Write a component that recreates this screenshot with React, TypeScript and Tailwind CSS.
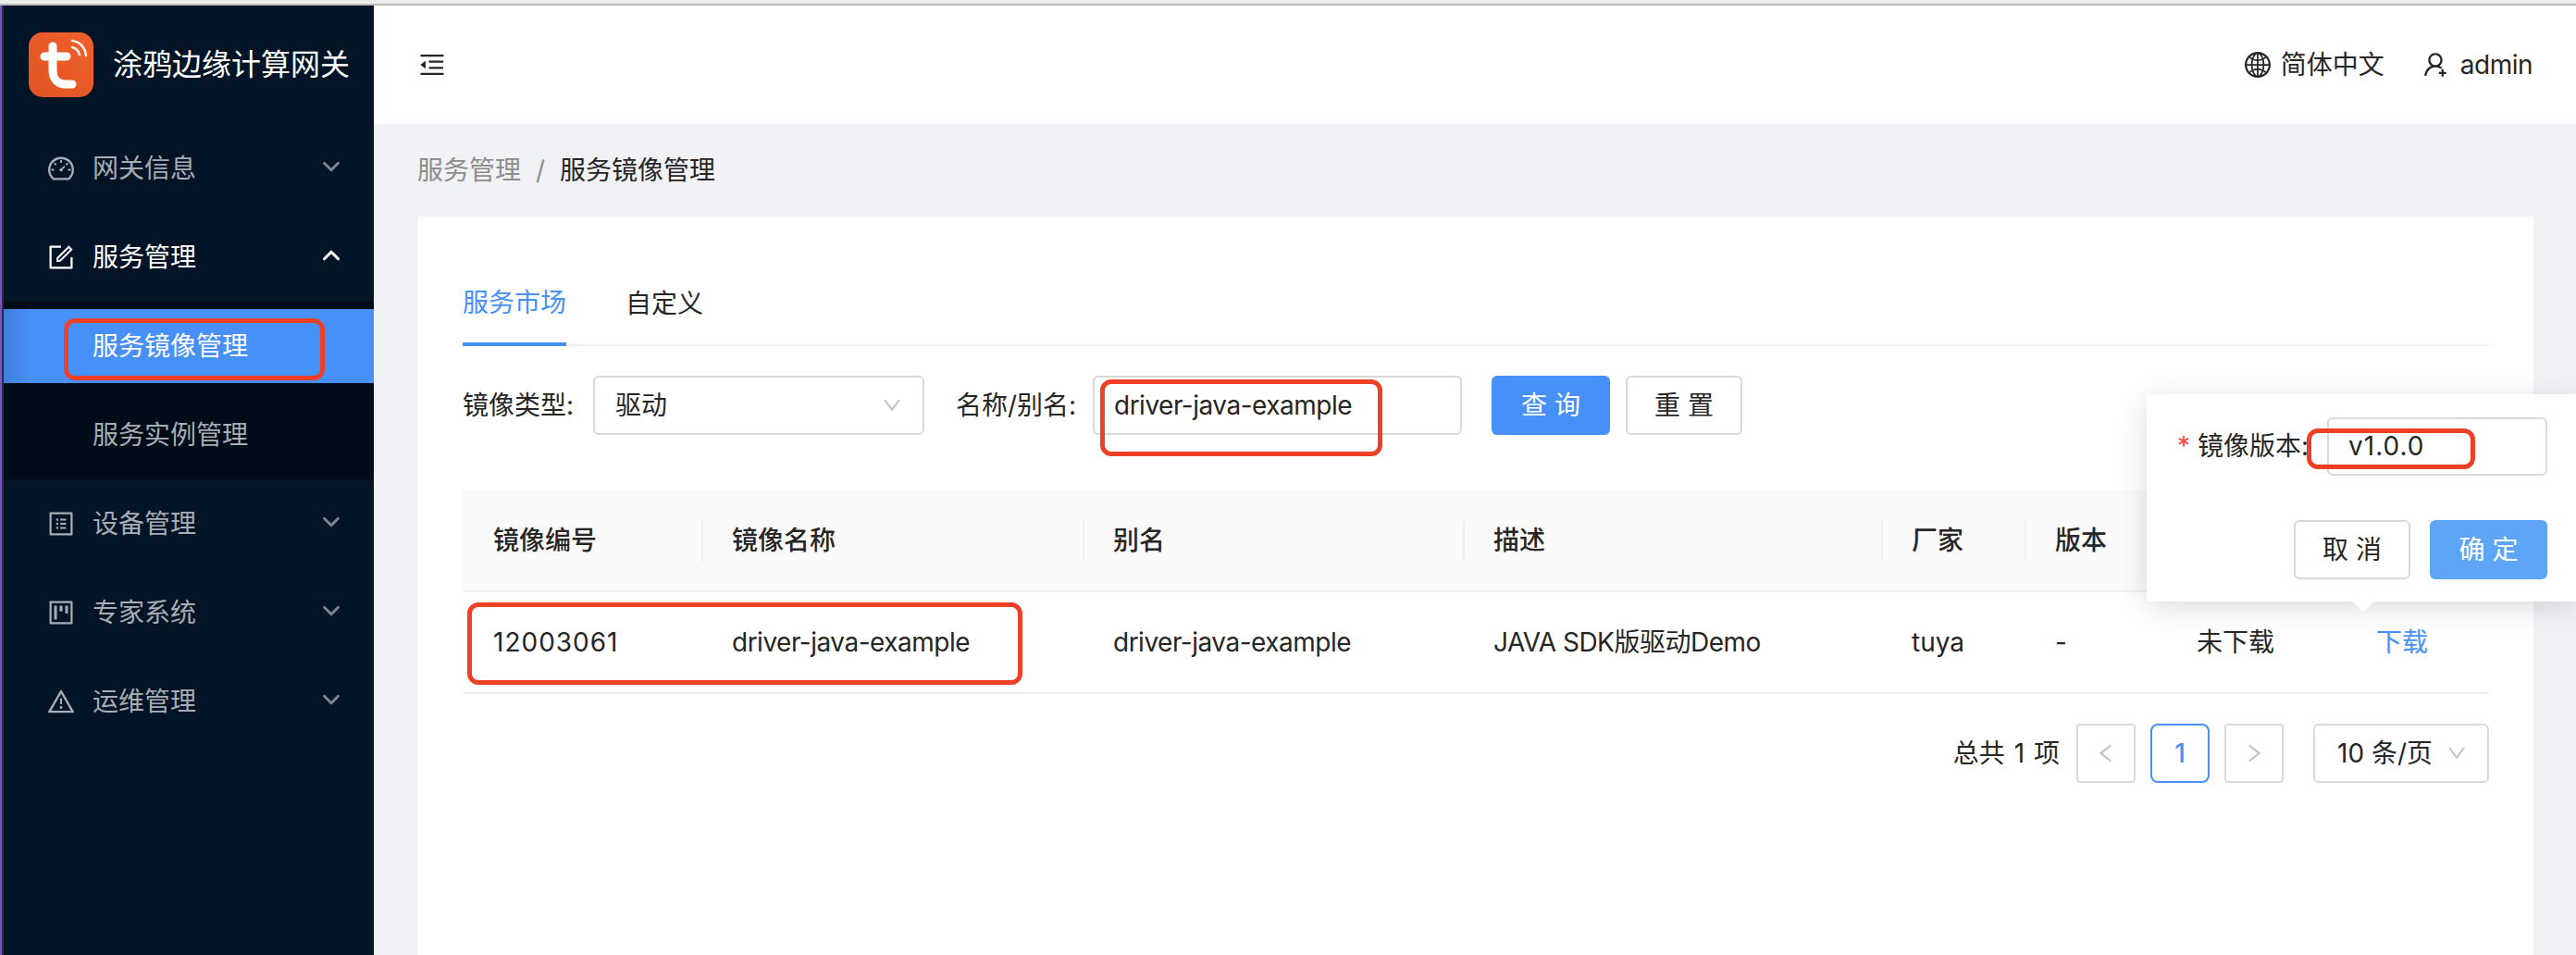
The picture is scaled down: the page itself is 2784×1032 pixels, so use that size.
import React from 'react';
import { ChevronDown, ChevronUp } from 'lucide-react';
import {
  AiOutlineDashboard,
  AiOutlineForm,
  AiOutlineProfile,
  AiOutlineProject,
  AiOutlineWarning,
  AiOutlineMenuFold,
  AiOutlineGlobal,
  AiOutlineUserAdd,
  AiOutlineDown,
  AiOutlineLeft,
  AiOutlineRight,
} from 'react-icons/ai';

const FONT = "font-['Inter','Noto_Sans_CJK_SC',sans-serif]";

const RedBox = ({ className }: { className: string }) => (
  <div className={`absolute border-[5px] border-[#ee4027] rounded-[12px] pointer-events-none ${className}`} />
);

const Logo = () => (
  <svg width="70" height="70" viewBox="0 0 70 70" className="shrink-0">
    <defs>
      <linearGradient id="tuya" x1="0" y1="1" x2="1" y2="0">
        <stop offset="0" stopColor="#e05525" />
        <stop offset="1" stopColor="#f0602c" />
      </linearGradient>
    </defs>
    <rect width="70" height="70" rx="15" fill="url(#tuya)" />
    <path
      d="M26 15 V41 C26 51 32 56 40 56 H47 M17 26 H41"
      fill="none"
      stroke="#fff"
      strokeWidth="9"
      strokeLinecap="round"
      strokeLinejoin="round"
    />
    <path d="M47 16 C51 17 54 20 55 24 M47 9 C55 10 61 16 62 25" fill="none" stroke="#fff" strokeWidth="2.6" strokeLinecap="round" opacity="0.9" />
  </svg>
);

const MenuItem = ({ icon, label, open, gap }: { icon: React.ReactNode; label: string; open?: boolean; gap: string }) => (
  <div className={`flex items-center h-[80px] pl-[48px] pr-[31px] ${gap} ${open ? 'text-white' : 'text-[#a6adb4]'}`}>
    <span className="w-[28px] flex justify-center text-[32px] [&>svg]:shrink-0">{icon}</span>
    <span className="ml-[20px] flex-1 text-[28px]">{label}</span>
    {open ? (
      <ChevronUp size={30} strokeWidth={2.5} className="mb-[4px]" />
    ) : (
      <ChevronDown size={30} strokeWidth={2.3} className="mb-[4px] opacity-75" />
    )}
  </div>
);

const HeadCell = ({ label, first }: { label: string; first?: boolean }) => (
  <div className="flex items-center">
    {first ? <span className="w-[33px]" /> : <span className="w-[2px] h-[45px] bg-[#efefef] mr-[31px]" />}
    <span className="font-medium">{label}</span>
  </div>
);

const Cell = ({ children, className = '' }: { children: React.ReactNode; className?: string }) => (
  <div className={`flex items-center pl-[33px] whitespace-nowrap ${className}`}>{children}</div>
);

const PageBox = ({ children, active }: { children: React.ReactNode; active?: boolean }) => (
  <div className={`w-[64px] h-[64px] flex items-center justify-center rounded-[4px] border-2 ${active ? 'border-[#4790f7] text-[#4790f7] font-medium rounded-[8px]' : 'border-[#d9d9d9] text-[#bfbfbf]'}`}>
    {children}
  </div>
);

const COLS = 'grid grid-cols-[258px_412px_411px_452px_155px_153px_194px_155px]';

export default function App() {
  return (
    <div className={`relative w-[2784px] h-[1032px] overflow-hidden bg-[#f0f2f5] text-[28px] text-[#262626] ${FONT}`}>
      {/* window strip */}
      <div className="h-[6px] bg-[#ececec] border-b-2 border-[#b9b9b9]" />
      <div className="flex h-[1026px]">
        <div className="w-[2px] bg-[#7a53c4]" />
        <div className="w-[2px] bg-[#2d2a4a]" />
        {/* sidebar */}
        <aside className="w-[400px] bg-[#031426] flex flex-col">
          <div className="h-[128px] flex items-center pl-[27px]">
            <Logo />
            <span className="ml-[21px] text-[32px] leading-none text-white whitespace-nowrap">涂鸦边缘计算网关</span>
          </div>
          <MenuItem gap="mt-[8px]" icon={<AiOutlineDashboard />} label="网关信息" />
          <MenuItem gap="mt-[16px]" icon={<AiOutlineForm />} label="服务管理" open />
          <div className="mt-[8px] py-[8px] bg-[#000c17]">
            <div className="relative h-[80px] flex items-center pl-[96px] text-white bg-[linear-gradient(90deg,#3f7fdb,#4790f7_30px)]">
              服务镜像管理
            </div>
            <div className="h-[80px] mt-[16px] flex items-center pl-[96px] text-[#a6adb4]">服务实例管理</div>
          </div>
          <MenuItem gap="mt-[8px]" icon={<AiOutlineProfile />} label="设备管理" />
          <MenuItem gap="mt-[16px]" icon={<AiOutlineProject />} label="专家系统" />
          <MenuItem gap="mt-[16px]" icon={<AiOutlineWarning />} label="运维管理" />
        </aside>

        {/* main */}
        <main className="flex-1 flex flex-col min-w-0">
          <header className="h-[128px] bg-white flex items-center pl-[47px] pr-[47px]">
            <AiOutlineMenuFold className="text-[32px] text-[#262626]" />
            <div className="flex-1" />
            <AiOutlineGlobal className="text-[32px] text-[#262626]" />
            <span className="ml-[9px]">简体中文</span>
            <AiOutlineUserAdd className="ml-[39px] text-[32px] text-[#262626]" />
            <span className="ml-[11px] tracking-[-0.5px]">admin</span>
          </header>

          <div className="h-[100px] flex items-center pl-[47px]">
            <span className="text-[#8c8c8c]">服务管理</span>
            <span className="mx-[16px] text-[#8c8c8c]">/</span>
            <span>服务镜像管理</span>
          </div>

          <section className="flex-1 ml-[48px] mr-[46px] bg-white px-[48px] pt-[48px]">
            {/* tabs */}
            <div className="flex h-[92px] gap-[64px] border-b-2 border-[#f0f0f0]">
              <div className="h-[92px] pt-[2px] flex items-center border-b-4 border-[#4790f7] text-[#4790f7]">服务市场</div>
              <div className="h-[90px] pt-[2px] flex items-center">自定义</div>
            </div>

            {/* filters */}
            <div className="relative mt-[32px] h-[64px] flex items-center">
              <span className="w-[141px] whitespace-nowrap">镜像类型:</span>
              <div className="w-[358px] h-[64px] flex items-center justify-between pl-[22px] pr-[21px] border-2 border-[#d9d9d9] rounded-[6px]">
                <span>驱动</span>
                <AiOutlineDown className="text-[24px] text-[#bfbfbf]" />
              </div>
              <span className="ml-[34px] w-[148px] whitespace-nowrap">名称/别名:</span>
              <div className="w-[399px] h-[64px] flex items-center pl-[21px] border-2 border-[#d9d9d9] rounded-[6px] tracking-[-0.5px]">
                driver-java-example
              </div>
              <button className="ml-[32px] w-[128px] h-[64px] rounded-[6px] bg-[#4790f7] text-white">查 询</button>
              <button className="ml-[17px] w-[126px] h-[64px] rounded-[6px] border-2 border-[#d9d9d9]">重 置</button>
              <RedBox className="left-[689px] top-[4px] w-[305px] h-[83px]" />
            </div>

            {/* table */}
            <div className="relative mt-[60px]">
              <div className={`${COLS} h-[110px] bg-[#fafafa] border-b-2 border-[#f0f0f0]`}>
                <HeadCell label="镜像编号" first />
                <HeadCell label="镜像名称" />
                <HeadCell label="别名" />
                <HeadCell label="描述" />
                <HeadCell label="厂家" />
                <HeadCell label="版本" />
                <HeadCell label="状态" />
                <HeadCell label="操作" />
              </div>
              <div className={`${COLS} h-[110px] border-b-2 border-[#f0f0f0]`}>
                <Cell className="tracking-[1px]">12003061</Cell>
                <Cell className="tracking-[-0.5px]">driver-java-example</Cell>
                <Cell className="tracking-[-0.5px]">driver-java-example</Cell>
                <Cell className="tracking-[-0.5px]">JAVA SDK版驱动Demo</Cell>
                <Cell>tuya</Cell>
                <Cell>-</Cell>
                <Cell>未下载</Cell>
                <Cell className="text-[#4790f7]">下载</Cell>
              </div>
              <RedBox className="left-[5px] top-[121px] w-[600px] h-[89px]" />
            </div>

            {/* pagination */}
            <div className="mt-[32px] flex items-center justify-end">
              <span className="mr-[18px] [word-spacing:2px]">总共 1 项</span>
              <PageBox><AiOutlineLeft className="text-[26px]" /></PageBox>
              <div className="ml-[16px]"><PageBox active>1</PageBox></div>
              <div className="ml-[16px]"><PageBox><AiOutlineRight className="text-[26px]" /></PageBox></div>
              <div className="ml-[32px] w-[190px] h-[64px] flex items-center justify-between pl-[24px] pr-[21px] border-2 border-[#d9d9d9] rounded-[6px]">
                <span>10 条/页</span>
                <AiOutlineDown className="text-[24px] text-[#bfbfbf]" />
              </div>
            </div>
          </section>
        </main>
      </div>

      {/* popconfirm */}
      <div className="absolute left-[2320px] top-[426px] w-[464px] h-[224px] bg-white rounded-l-[4px] shadow-[0_6px_32px_rgba(0,0,0,0.14)]">
        <div className="absolute left-[226px] top-[216px] w-[16px] h-[16px] bg-white rotate-45" />
        <div className="flex items-center pl-[33px] pt-[24px] h-[88px]">
          <span className="w-[22px] text-[#f5493d]">*</span>
          <span className="w-[140px] whitespace-nowrap">镜像版本:</span>
          <div className="w-[238px] h-[63px] flex items-center pl-[21px] border-2 border-[#d9d9d9] rounded-[6px] tracking-[1px]">v1.0.0</div>
        </div>
        <div className="mt-[48px] flex justify-end pr-[31px] gap-[21px]">
          <button className="w-[126px] h-[64px] rounded-[6px] border-2 border-[#d9d9d9]">取 消</button>
          <button className="w-[127px] h-[64px] rounded-[6px] bg-[#5fa5f7] text-white">确 定</button>
        </div>
        <RedBox className="left-[173px] top-[37px] w-[182px] h-[44px]" />
      </div>

      {/* sidebar selection mark */}
      <RedBox className="left-[69px] top-[344px] w-[282px] h-[67px]" />
    </div>
  );
}
